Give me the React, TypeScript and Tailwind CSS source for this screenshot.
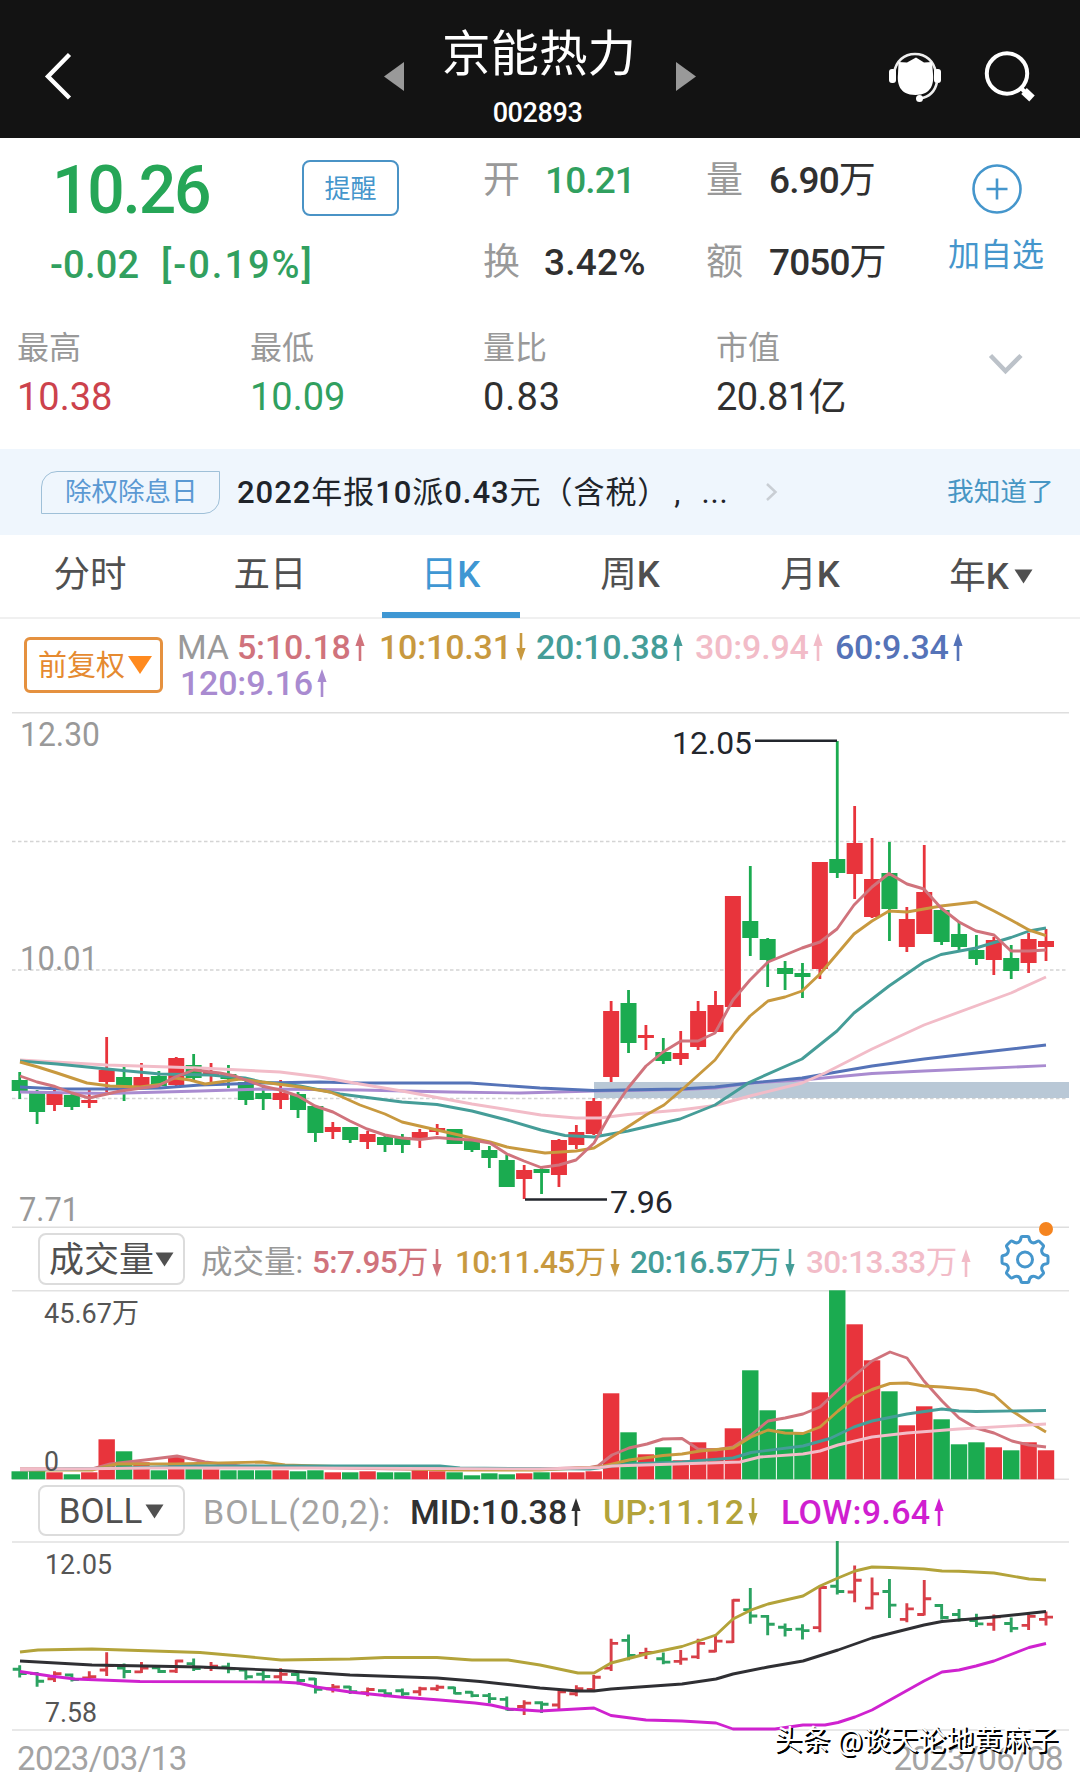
import React from 'react';

type Point = [number, number];
// [color, high, body top, body bottom, low]
type Candle = ['r' | 'g', number, number, number, number];

const RED = '#e8343c';
const GREEN = '#1bab50';

const MA_COLORS = {
  ma5: '#d0737c',
  ma10: '#c8993f',
  ma20: '#459d98',
  ma30: '#f2bcc8',
  ma60: '#5573b8',
  ma120: '#a98bd0',
};

const candles: Candle[] = [
  ['g', 1072, 1080, 1091, 1099],
  ['g', 1090, 1091, 1112, 1124],
  ['r', 1088, 1092, 1105, 1111],
  ['g', 1094, 1095, 1107, 1110],
  ['r', 1088, 1100, 1103, 1108],
  ['r', 1037, 1070, 1082, 1095],
  ['g', 1067, 1077, 1086, 1101],
  ['r', 1063, 1077, 1087, 1087],
  ['g', 1071, 1076, 1086, 1087],
  ['r', 1057, 1058, 1085, 1087],
  ['g', 1054, 1065, 1078, 1082],
  ['r', 1063, 1072, 1075, 1082],
  ['g', 1065, 1074, 1079, 1088],
  ['g', 1080, 1082, 1100, 1105],
  ['g', 1085, 1093, 1099, 1110],
  ['r', 1080, 1093, 1100, 1109],
  ['g', 1092, 1094, 1110, 1118],
  ['g', 1106, 1106, 1133, 1142],
  ['r', 1122, 1127, 1132, 1139],
  ['g', 1127, 1127, 1140, 1143],
  ['r', 1131, 1134, 1142, 1149],
  ['g', 1136, 1137, 1145, 1152],
  ['g', 1134, 1137, 1145, 1153],
  ['r', 1129, 1132, 1140, 1148],
  ['r', 1124, 1128, 1132, 1135],
  ['g', 1129, 1129, 1144, 1144],
  ['g', 1141, 1141, 1150, 1152],
  ['g', 1146, 1150, 1158, 1168],
  ['g', 1155, 1160, 1187, 1187],
  ['r', 1165, 1170, 1179, 1199],
  ['g', 1168, 1169, 1173, 1194],
  ['r', 1139, 1140, 1175, 1187],
  ['r', 1125, 1132, 1145, 1149],
  ['r', 1098, 1101, 1134, 1135],
  ['r', 1001, 1011, 1077, 1082],
  ['g', 990, 1003, 1043, 1053],
  ['r', 1025, 1035, 1038, 1050],
  ['g', 1038, 1052, 1061, 1064],
  ['r', 1031, 1053, 1059, 1065],
  ['r', 1001, 1011, 1047, 1050],
  ['r', 991, 1005, 1032, 1032],
  ['r', 896, 896, 1007, 1007],
  ['g', 866, 921, 938, 956],
  ['g', 938, 939, 960, 987],
  ['g', 961, 968, 974, 990],
  ['g', 963, 973, 977, 998],
  ['r', 862, 862, 969, 979],
  ['g', 741, 859, 873, 878],
  ['r', 806, 843, 874, 899],
  ['r', 838, 879, 917, 918],
  ['g', 842, 873, 909, 941],
  ['r', 907, 919, 947, 952],
  ['r', 845, 892, 934, 934],
  ['g', 909, 910, 942, 945],
  ['g', 922, 934, 947, 950],
  ['g', 935, 950, 959, 965],
  ['r', 937, 940, 960, 975],
  ['g', 945, 958, 971, 979],
  ['r', 933, 939, 963, 973],
  ['r', 929, 941, 947, 961],
];

const volumes = [
  8, 9, 7, 5, 7, 40, 28, 17, 9, 23, 14, 10, 9, 9, 9, 9, 8, 9, 7, 7, 8, 7, 7, 9, 8, 7, 4, 6, 5, 6,
  7, 7, 7, 8, 86, 47, 25, 32, 19, 37, 31, 51, 109, 69, 50, 47, 87, 189, 155, 119, 88, 54, 73, 60, 35, 37,
  32, 29, 37, 29,
];

const priceLines: { color: string; points: Point[] }[] = [
  { color: MA_COLORS.ma120, points: [[20, 1092], [107, 1093.5], [200, 1091], [262, 1089], [360, 1090], [450, 1092], [520, 1093], [594, 1091], [680, 1089.5], [715, 1088], [750, 1083], [802, 1080], [872, 1073.5], [924, 1071], [1046, 1065.6]] },
  { color: MA_COLORS.ma60, points: [[20, 1087], [60, 1089], [107, 1089], [160, 1088], [200, 1085], [262, 1083], [320, 1082], [360, 1083], [470, 1083], [540, 1088], [594, 1090.5], [680, 1089], [715, 1087], [750, 1083], [802, 1078], [872, 1066], [924, 1059], [976, 1053], [1046, 1045]] },
  { color: MA_COLORS.ma30, points: [[20, 1060], [107, 1065], [200, 1068], [280, 1072], [320, 1077], [360, 1084], [402, 1091], [472, 1104], [541, 1115], [576, 1118], [600, 1118], [628, 1114.5], [680, 1110], [715, 1105.5], [750, 1096], [802, 1083], [825, 1073], [872, 1049], [924, 1025], [1011, 993], [1046, 977]] },
  { color: MA_COLORS.ma20, points: [[20, 1061], [57, 1064], [107, 1069], [160, 1074], [210, 1075], [245, 1078], [262, 1082], [300, 1086], [340, 1094], [402, 1102], [437, 1104.5], [472, 1111], [507, 1120], [541, 1130], [565, 1135.5], [594, 1137], [628, 1131], [680, 1119], [715, 1105], [750, 1082], [802, 1059], [837, 1031], [854, 1013], [889, 986], [924, 962], [941, 954.5], [976, 948], [1011, 937.5], [1029, 931], [1046, 928]] },
  { color: MA_COLORS.ma10, points: [[20, 1062], [38, 1067], [57, 1073], [87, 1083], [110, 1086], [140, 1087], [160, 1084.5], [175, 1078], [190, 1080], [205, 1084], [220, 1082], [240, 1079], [262, 1082], [300, 1087], [330, 1092], [340, 1096], [360, 1105], [385, 1114], [402, 1122], [437, 1130], [472, 1138], [490, 1142], [507, 1147], [545, 1153], [576, 1151], [594, 1148], [620, 1132], [646, 1115], [664, 1105], [685, 1087], [715, 1060], [735, 1033], [750, 1016], [768, 1001], [785, 997], [802, 991], [820, 974], [837, 954], [854, 934], [872, 921], [889, 911], [907, 912], [924, 909], [941, 906], [976, 902], [994, 911], [1011, 920], [1029, 930], [1046, 935.6]] },
  { color: MA_COLORS.ma5, points: [[20, 1076], [37, 1082], [55, 1086.5], [72, 1093], [89, 1098], [107, 1094], [120, 1091], [142, 1088], [158, 1086], [175, 1077], [194, 1070], [220, 1073], [235, 1076], [262, 1086], [280, 1090], [298, 1096], [315, 1106], [333, 1112], [350, 1121], [367, 1129], [385, 1135], [402, 1138], [420, 1139.5], [437, 1137.5], [454, 1139], [472, 1140], [490, 1143], [507, 1154], [524, 1161], [541, 1167.5], [559, 1165], [576, 1160], [594, 1143], [611, 1113], [628, 1088], [646, 1066], [663, 1052], [681, 1041], [698, 1041], [715, 1033], [733, 1000], [750, 980], [768, 962], [785, 955], [802, 948], [820, 942], [837, 929], [854, 905], [872, 887], [889, 873.5], [907, 884], [924, 889], [941, 908], [959, 922], [976, 931], [994, 935], [1011, 951], [1029, 951], [1046, 950]] },
];

const volumeLines: { color: string; points: Point[] }[] = [
  { color: MA_COLORS.ma5, points: [[20, 1469], [92, 1469], [110, 1464], [145, 1460], [177, 1456], [205, 1462], [240, 1466], [290, 1467], [400, 1469], [540, 1469], [590, 1467.5], [598, 1466], [612, 1455], [629, 1448], [647, 1444], [663, 1439], [682, 1438.5], [698, 1449], [716, 1450], [733, 1447], [751, 1435], [768, 1421], [785, 1418], [803, 1414], [820, 1407], [838, 1390], [854, 1376], [872, 1361], [890, 1352], [907, 1358], [924, 1381], [942, 1401], [959, 1418], [976, 1428], [994, 1433], [1012, 1441], [1029, 1445], [1046, 1447]] },
  { color: MA_COLORS.ma10, points: [[20, 1470], [92, 1470], [117, 1464], [175, 1464], [262, 1462], [285, 1465], [450, 1470], [540, 1470], [600, 1467], [629, 1460], [663, 1455.5], [682, 1454], [700, 1451], [733, 1448], [751, 1437], [768, 1430], [785, 1433], [803, 1433.5], [820, 1427], [838, 1411], [854, 1398], [872, 1389.5], [890, 1383.5], [907, 1383], [924, 1386], [942, 1387], [976, 1390], [994, 1395], [1012, 1411], [1029, 1422], [1046, 1432]] },
  { color: MA_COLORS.ma20, points: [[20, 1470], [120, 1468], [200, 1466], [440, 1466], [460, 1468], [590, 1469], [629, 1464], [682, 1462], [733, 1458], [751, 1452.5], [803, 1446], [830, 1438.5], [854, 1427], [872, 1421], [907, 1414], [942, 1409], [959, 1411], [976, 1411.5], [1046, 1410.5]] },
  { color: MA_COLORS.ma30, points: [[20, 1469.5], [150, 1468], [300, 1468], [540, 1469], [600, 1467.5], [612, 1466], [740, 1462], [760, 1457], [803, 1454], [820, 1451], [838, 1445], [872, 1437], [907, 1433], [959, 1429], [1046, 1424]] },
];

const bollLines: { color: string; points: Point[] }[] = [
  { color: '#b3a33a', points: [[20, 1652], [38, 1650], [92, 1649], [200, 1652.5], [240, 1656], [281, 1660], [350, 1659], [385, 1657.5], [437, 1657.5], [472, 1660], [508, 1660], [540, 1665], [578, 1673], [594, 1673], [611, 1663], [646, 1654], [682, 1646.5], [716, 1635], [733, 1619], [751, 1610], [768, 1604], [803, 1596], [820, 1586], [838, 1578], [855, 1571], [872, 1567], [890, 1567.5], [924, 1569], [942, 1571], [959, 1571.3], [994, 1573], [1029, 1579], [1046, 1580]] },
  { color: '#2f2f33', points: [[20, 1661], [92, 1665], [200, 1667], [281, 1670.5], [350, 1675], [437, 1678], [480, 1681.5], [540, 1688], [578, 1691], [594, 1691], [611, 1689], [682, 1684], [716, 1679], [733, 1674], [768, 1667], [803, 1661], [838, 1650], [872, 1638], [924, 1625], [942, 1621.5], [994, 1617], [1046, 1611.5]] },
  { color: '#cf22cf', points: [[20, 1671.5], [50, 1676], [75, 1679], [140, 1681.5], [280, 1682], [298, 1683], [316, 1687], [350, 1692], [400, 1697], [440, 1700], [475, 1703], [491, 1705], [509, 1709], [540, 1711], [594, 1708], [611, 1715.5], [646, 1720], [682, 1721], [716, 1723], [733, 1729], [775, 1729], [803, 1725], [825, 1725], [838, 1722.5], [855, 1717], [872, 1710], [890, 1700], [907, 1690.5], [924, 1681], [942, 1672], [959, 1670], [976, 1666], [994, 1661], [1029, 1647.5], [1046, 1643.5]] },
];

const candleX = (i: number) => 19.7 + 17.395 * i;
const fill = (c: 'r' | 'g') => (c === 'r' ? RED : GREEN);

const Lines: React.FC<{ lines: { color: string; points: Point[] }[] }> = ({ lines }) => (
  <g fill="none" strokeWidth={2.9} strokeLinejoin="round">
    {lines.map((l, i) => (
      <polyline key={i} stroke={l.color} points={l.points.map((p) => p.join(',')).join(' ')} />
    ))}
  </g>
);

interface LabelProps {
  x: number;
  y: number;
  size: number;
  width: number;
  color: string;
  children: string;
}

const Label: React.FC<LabelProps> = ({ x, y, size, width, color, children }) => (
  <text x={x} y={y} fontSize={size} textLength={width} fill={color} lengthAdjust="spacingAndGlyphs">
    {children}
  </text>
);

const PriceChart = () => (
  <svg className="block h-[516px] w-full shrink-0" viewBox="0 712 1080 516">
    <path d="M12 712.7H1069M12 1227.4H1069" stroke="#dedede" strokeWidth={1.6} />
    <path d="M12 841.5H1067M12 970H1067M12 1098.5H1067" stroke="#d4d4d4" strokeWidth={1.3} strokeDasharray="3.5 2.5" />
    <rect x={594} y={1082} width={475} height={16} fill="#b9c8d6" />
    {candles.map(([c, high, top, bottom, low], i) => (
      <g key={i} fill={fill(c)}>
        <rect x={candleX(i) - 1.4} y={high} width={2.8} height={low - high} />
        <rect x={candleX(i) - 8} y={top} width={16} height={bottom - top} />
      </g>
    ))}
    <Lines lines={priceLines} />
    <path d="M755 740.7H837M525 1199.5H607" stroke="#23262d" strokeWidth={2.6} />
    <Label x={20} y={746} size={33} width={80} color="#999">12.30</Label>
    <Label x={20} y={970} size={33} width={78} color="#999">10.01</Label>
    <Label x={19} y={1221} size={33} width={60} color="#999">7.71</Label>
    <Label x={672} y={754} size={32} width={80} color="#23262d">12.05</Label>
    <Label x={610} y={1213} size={32} width={63} color="#23262d">7.96</Label>
  </svg>
);

const VolumeChart = () => (
  <svg className="block h-[190px] w-full shrink-0" viewBox="0 1290 1080 190">
    <path d="M12 1290.7H1069M12 1479.2H1069" stroke="#e2e2e2" strokeWidth={1.5} />
    {volumes.map((v, i) => (
      <rect key={i} x={candleX(i) - 8.2} y={1479.3 - v} width={16.4} height={v} fill={fill(candles[i][0])} />
    ))}
    <Lines lines={volumeLines} />
    <Label x={44} y={1323} size={28} width={95} color="#555">45.67万</Label>
    <Label x={44} y={1471} size={27} width={15} color="#555">0</Label>
  </svg>
);

// The BOLL pane reuses the candle data, squeezed into its own range
const bollY = (y: number) => 1542 + (y - 741) * 0.3755;

const BollChart = () => (
  <svg className="block h-[190px] w-full shrink-0" viewBox="0 1541 1080 190">
    <path d="M12 1542H1069M12 1730H1069" stroke="#e8e8e8" strokeWidth={2} />
    {candles.map(([c, high, top, bottom, low], i) => {
      const x = candleX(i);
      const open = bollY(c === 'r' ? bottom : top);
      const close = bollY(c === 'r' ? top : bottom);
      return (
        <path
          key={i}
          d={`M${x - 7} ${open}H${x}M${x} ${close}H${x + 7}M${x} ${bollY(high) - 1}V${bollY(low) + 1}`}
          stroke={c === 'r' ? '#d83f48' : '#2ba261'}
          strokeWidth={2.9}
        />
      );
    })}
    <Lines lines={bollLines} />
    <Label x={45} y={1574} size={28} width={67} color="#555">12.05</Label>
    <Label x={45} y={1722} size={28} width={52} color="#555">7.58</Label>
  </svg>
);

// Digits are set a step heavier than the Chinese characters around them
const Mixed: React.FC<{ children: string }> = ({ children }) => (
  <>
    {children.split(/([0-9.:]+)/).map((part, i) =>
      i % 2 ? <span key={i} className="font-medium">{part}</span> : part
    )}
  </>
);

const Arrow: React.FC<{ down?: boolean }> = ({ down }) => (
  <svg className={down ? 'ml-1 shrink-0 rotate-180' : 'ml-1 shrink-0'} width="10" height="28" viewBox="0 0 10 28" fill="currentColor">
    <path d="M5 0L9.6 13H6.3V28H3.7V13H0.4Z" />
  </svg>
);

const Caret: React.FC<{ className?: string }> = ({ className }) => (
  <svg className={className} width="19" height="15" viewBox="0 0 19 15" fill="currentColor">
    <path d="M0.5 0.5H18.5L9.5 14.5Z" />
  </svg>
);

const Legend: React.FC<{ className: string; down?: boolean; children: React.ReactNode }> = ({ className, down, children }) => (
  <span className={`flex items-center ${className}`}>
    <span>{children}</span>
    <Arrow down={down} />
  </span>
);

const Header = () => (
  <header className="flex h-[138px] shrink-0 items-start bg-[#131313] text-white">
    <svg className="ml-[44px] mt-[52px]" width="28" height="48" viewBox="0 0 28 48" fill="none" stroke="#fff" strokeWidth="4.4">
      <path d="M25.5 2.5L4 24.5L25.5 46" />
    </svg>
    <svg className="ml-[312px] mt-[62px]" width="20" height="29" viewBox="0 0 20 29" fill="#999">
      <path d="M20 0V29L0 14.5Z" />
    </svg>
    <div className="w-[272px] text-center">
      <div className="mt-[20px] pr-[2px] text-[48.5px] leading-[70px]">京能热力</div>
      <div className="mt-[8px] pr-[5px] text-[27px] leading-[30px] font-medium tracking-[-0.4px]">002893</div>
    </div>
    <svg className="mt-[62px]" width="20" height="29" viewBox="0 0 20 29" fill="#999">
      <path d="M0 0V29L20 14.5Z" />
    </svg>
    <svg className="ml-[193px] mt-[51px]" width="52" height="54" viewBox="0 0 52 54">
      <path d="M5 22C7 10 15 3 26 3S45 10 47 22" fill="none" stroke="#eee" strokeWidth="2.6" />
      <path d="M9.5 11L18 11.5L27 6.5L35 11.5L43 11L44 23C45 32 43 44 26.5 44S8 32 9 23Z" fill="#fff" />
      <rect x="0" y="18" width="7" height="14" rx="3" fill="#fff" />
      <rect x="45" y="18" width="7" height="14" rx="3" fill="#fff" />
      <path d="M48 31C46 41 40 46 31 47.5" fill="none" stroke="#eee" strokeWidth="2.6" />
      <circle cx="30.5" cy="47.5" r="3.5" fill="#fff" />
    </svg>
    <svg className="ml-[42px] mt-[50px]" width="52" height="54" viewBox="0 0 52 54" fill="none" stroke="#fff">
      <circle cx="24" cy="23.5" r="20.2" strokeWidth="4" />
      <path d="M38 38L42 42" strokeWidth="4" />
      <path d="M41 41L49 48.5" strokeWidth="8" />
    </svg>
  </header>
);

const stats = [
  { label: '最高', value: '10.38', color: 'text-[#cc424c]' },
  { label: '最低', value: '10.09', color: 'text-[#31a05f]' },
  { label: '量比', value: '0.83', color: 'text-[#303030] tracking-[1px]' },
  { label: '市值', value: '20.81亿', color: 'text-[#303030] tracking-[-0.6px]' },
];

const Quote = () => (
  <section className="h-[311px] shrink-0">
    <div className="flex h-[172px]">
      <div className="w-[483px]">
        <div className="flex h-[86px] pt-[22px]">
          <div className="ml-[52px] w-[250px] pt-[2px] text-[66px] leading-[58px] font-medium tracking-[-2.2px] text-[#26a657]">10.26</div>
          <button className="h-[56px] w-[97px] rounded-lg border-[2.5px] border-[#4a93c6] pt-[2px] text-[26px] leading-[48px] text-[#4596cc]">提醒</button>
        </div>
        <div className="ml-[50px] flex pt-[2px] text-[38px] leading-[78px] font-medium text-[#31a05f]">
          <span className="w-[111px] tracking-[0.2px]">-0.02</span>
          <span className="tracking-[2px]">[-0.19%]</span>
        </div>
      </div>
      <div className="grid w-[475px] grid-cols-[61px_162px_63px_189px] grid-rows-[82px_82px] pt-px text-[37px] leading-[84px] tracking-[-0.9px] whitespace-nowrap text-[#303030]">
        <span className="text-[#999]">开</span>
        <span className="pl-[1px] font-medium text-[#31a05f]">10.21</span>
        <span className="text-[#999]">量</span>
        <span><Mixed>6.90万</Mixed></span>
        <span className="text-[#999]">换</span>
        <span className="font-medium tracking-[0.2px]">3.42%</span>
        <span className="text-[#999]">额</span>
        <span><Mixed>7050万</Mixed></span>
      </div>
      <div className="w-[78px] pt-[26px] text-[#4596cc]">
        <svg className="mx-auto" width="50" height="50" viewBox="0 0 50 50" fill="none" stroke="currentColor" strokeWidth="2.6">
          <circle cx="25" cy="25" r="23.5" />
          <path d="M14.5 25H35.5M25 14.5V35.5" />
        </svg>
        <div className="mt-[21px] -ml-[10px] w-[98px] text-[32px] leading-[40px] whitespace-nowrap">加自选</div>
      </div>
    </div>
    <div className="flex h-[139px] pl-[17px]">
      {stats.map((s) => (
        <div key={s.label} className="w-[233px] last-of-type:w-[272px]">
          <div className="pt-[18px] text-[32px] leading-[40px] text-[#999]">{s.label}</div>
          <div className={`text-[38px] leading-[58px] ${s.color}`}>{s.value}</div>
        </div>
      ))}
      <svg className="mt-[43px]" width="36" height="22" viewBox="0 0 36 22" fill="none" stroke="#bcc2c9" strokeWidth="4.5">
        <path d="M2.5 2.5L17.5 18L33 2.5" />
      </svg>
    </div>
  </section>
);

const Notice = () => (
  <section className="flex h-[86px] shrink-0 items-center bg-[#eff6fd] pl-[41px]">
    <span className="h-[43px] w-[179px] rounded-tl-[16px] rounded-br-[16px] border-[1.5px] border-[#9fc0d8] pt-px pl-[23px] text-[26.5px] leading-[38px] whitespace-nowrap text-[#5b99d3]">除权除息日</span>
    <span className="ml-[17px] flex w-[528px] pt-[2px] text-[31px] tracking-[0.95px] whitespace-nowrap text-[#20242a]">
      <span><Mixed>2022年报10派0.43元（含税）</Mixed></span>
      <span className="ml-[5px]">,</span>
      <span className="ml-[20px]">...</span>
    </span>
    <svg width="13" height="20" viewBox="0 0 13 20" fill="none" stroke="#c9ced4" strokeWidth="2.5">
      <path d="M2 2L10.5 10L2 18" />
    </svg>
    <span className="ml-[169px] pt-px text-[26.7px] whitespace-nowrap text-[#4796c4]">我知道了</span>
  </section>
);

const tabs = ['分时', '五日', '日K', '周K', '月K', '年K'];

const Tabs = () => (
  <nav className="grid h-[84px] shrink-0 grid-cols-6 border-b-2 border-[#f0f0f0] text-[36.5px] text-[#505050]">
    {tabs.map((t) => (
      <div key={t} className={t === '日K' ? 'flex flex-col items-center pl-px text-[#3f97d3]' : 'flex flex-col items-center'}>
        <div className={t === '年K' ? 'flex h-[77px] items-center pt-[7px] pl-[2px]' : 'flex h-[77px] items-center pt-[4px]'}>
          {t.replace('K', '')}
          {t.endsWith('K') && <span className="font-medium">K</span>}
          {t === '年K' && <Caret className="mb-[2px] ml-[5px]" />}
        </div>
        {t === '日K' && <div className="h-[6px] w-[138px] bg-[#3f97d3]" />}
      </div>
    ))}
  </nav>
);

const MaLegend = () => (
  <div className="flex h-[93px] shrink-0 pl-[24px]">
    <button className="mt-[18px] flex h-[56px] w-[139px] items-center rounded-md border-[3px] border-[#e5913f] pt-[3px] pl-[11px] text-[29px] whitespace-nowrap text-[#e58a30]">
      前复权
      <svg className="mb-[3px] ml-[3px] shrink-0" width="24" height="20" viewBox="0 0 24 20" fill="#ff8a1f">
        <path d="M0 1H24L12 19Z" />
      </svg>
    </button>
    <div className="ml-[14px] pt-[10px] text-[34px] leading-[36px] font-medium tracking-[-0.2px]">
      <div className="flex whitespace-nowrap">
        <span className="w-[60px] font-normal text-[#999]">MA</span>
        <Legend className="w-[142px] text-[#d0737c]">5:10.18</Legend>
        <Legend className="w-[157px] text-[#c8993f]" down>10:10.31</Legend>
        <Legend className="w-[159px] text-[#459d98]">20:10.38</Legend>
        <Legend className="w-[140px] text-[#f2bcc8]">30:9.94</Legend>
        <Legend className="text-[#5573b8]">60:9.34</Legend>
      </div>
      <div className="flex">
        <Legend className="ml-[3px] text-[#a98bd0]">120:9.16</Legend>
      </div>
    </div>
  </div>
);

const VolumeBar = () => (
  <div className="relative flex h-[62px] shrink-0 items-center pl-[38px] whitespace-nowrap">
    <button className="flex h-[52px] w-[147px] items-center justify-center rounded-lg border-[2.5px] border-[#dcdcdc] pt-[4px] text-[35px] text-[#505050]">
      成交量
      <Caret className="mb-[3px] ml-[1px] shrink-0" />
    </button>
    <div className="ml-[16px] flex items-center pt-[7px] text-[31.5px] leading-[40px] tracking-[-0.6px]">
      <span className="w-[111px] tracking-normal text-[#999]">成交量:</span>
      <Legend className="w-[143px] text-[#d0737c]" down><Mixed>5:7.95万</Mixed></Legend>
      <Legend className="w-[175px] text-[#c8993f]" down><Mixed>10:11.45万</Mixed></Legend>
      <Legend className="w-[176px] text-[#459d98]" down><Mixed>20:16.57万</Mixed></Legend>
      <Legend className="text-[#f2bcc8]"><Mixed>30:13.33万</Mixed></Legend>
    </div>
    <svg className="absolute top-[-8px] left-[1000px]" width="56" height="68" viewBox="0 0 56 68" fill="none" stroke="#4596cc" strokeWidth="3">
      <path
        strokeLinejoin="round"
        d="M21 18Q21 16.500 22.500 16.500H27.500Q29 16.500 29 18Q29.500 21.500 32 22.600Q34.500 23.500 37 21.500Q38.500 20.500 39.500 21.500L43 25Q44 26 43 27.500Q41 30 42 32.500Q43 35 46.500 35.500Q48 35.700 48 37V42Q48 43.500 46.500 43.700Q43 44 42 46.500Q41 49 43 51.500Q44 53 43 54L39.500 57.500Q38.500 58.500 37 57.500Q34.500 55.500 32 56.500Q29.500 57.500 29 61Q29 62.500 27.500 62.500H22.500Q21 62.500 21 61Q20.500 57.500 18 56.500Q15.500 55.500 13 57.500Q11.500 58.500 10.500 57.500L7 54Q6 53 7 51.500Q9 49 8 46.500Q7 44 3.500 43.700Q2 43.500 2 42V37Q2 35.700 3.500 35.500Q7 35 8 32.500Q9 30 7 27.500Q6 26 7 25L10.500 21.500Q11.500 20.500 13 21.500Q15.500 23.500 18 22.600Q20.500 21.500 21 18Z"
      />
      <circle cx="25" cy="39.5" r="7.5" />
      <circle cx="46" cy="9" r="7" fill="#f5841f" stroke="none" />
    </svg>
  </div>
);

const BollBar = () => (
  <div className="flex h-[61px] shrink-0 items-center pl-[38px] whitespace-nowrap">
    <button className="flex h-[51px] w-[147px] items-center justify-center rounded-lg border-[2.5px] border-[#dcdcdc] pt-[3px] text-[35px] text-[#505050]">
      BOLL
      <Caret className="mb-[2px] ml-[3px] shrink-0" />
    </button>
    <div className="ml-[18px] flex items-center pt-[3px] text-[34px] leading-[40px] font-medium">
      <span className="w-[207px] font-normal tracking-[1px] text-[#a3a3a3]">BOLL(20,2):</span>
      <Legend className="w-[193px] text-[#303030]">MID:10.38</Legend>
      <Legend className="w-[178px] tracking-[0.2px] text-[#b3a33a]" down>UP:11.12</Legend>
      <Legend className="tracking-[0.3px] text-[#d01fd0]">LOW:9.64</Legend>
    </div>
  </div>
);

export default function App() {
  return (
    <div className="relative flex h-[1779px] w-[1080px] flex-col overflow-hidden bg-white font-['Roboto','Noto_Sans_CJK_SC',sans-serif]">
      <Header />
      <Quote />
      <Notice />
      <Tabs />
      <MaLegend />
      <PriceChart />
      <VolumeBar />
      <VolumeChart />
      <BollBar />
      <BollChart />
      <footer className="flex h-[48px] justify-between pt-[7px] pr-[17px] pl-[17px] text-[33px] leading-[42px] tracking-[-0.6px] text-[#a3a3a3]">
        <span>2023/03/13</span>
        <span>2023/06/08</span>
      </footer>
      {/* Author mark */}
      <div className="absolute top-[1721px] left-[774px] text-[28px] leading-[40px] whitespace-nowrap text-white [text-shadow:1.5px_1.5px_0_#000,2px_2px_0_#000]">
        头条 @谈天论地黄麻子
      </div>
    </div>
  );
}
